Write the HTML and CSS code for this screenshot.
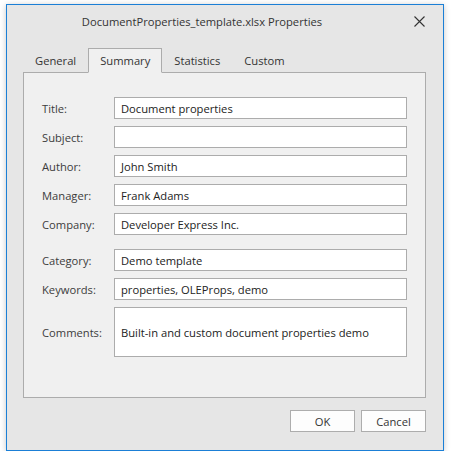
FILE: index.html
```html
<!DOCTYPE html>
<html lang="en">
<head>
<meta charset="utf-8">
<title>DocumentProperties_template.xlsx Properties</title>
<link rel="stylesheet" href="styles.css">
</head>
<body>
<div class="window">
  <div class="titlebar">
    <div class="title">DocumentProperties_template.xlsx Properties</div>
    <div class="close">
      <svg width="11" height="11" viewBox="0 0 11 11"><path d="M0.5 0.5 L10.5 10.5 M10.5 0.5 L0.5 10.5" stroke="#333" stroke-width="1.1" fill="none"/></svg>
    </div>
  </div>
  <div class="tabs">
    <div class="tab">General</div>
    <div class="tab active">Summary</div>
    <div class="tab">Statistics</div>
    <div class="tab">Custom</div>
    <div class="tab-fill"></div>
  </div>
  <div class="panel">
    <div class="form">
      <div class="label">Title:</div><div class="field">Document properties</div>
      <div class="label">Subject:</div><div class="field"></div>
      <div class="label">Author:</div><div class="field">John Smith</div>
      <div class="label">Manager:</div><div class="field">Frank Adams</div>
      <div class="label">Company:</div><div class="field">Developer Express Inc.</div>
    </div>
    <div class="form group2">
      <div class="label">Category:</div><div class="field">Demo template</div>
      <div class="label">Keywords:</div><div class="field">properties, OLEProps, demo</div>
      <div class="label">Comments:</div><div class="field memo">Built-in and custom document properties demo</div>
    </div>
  </div>
  <div class="buttons">
    <div class="btn">OK</div>
    <div class="btn">Cancel</div>
  </div>
</div>
</body>
</html>
```

FILE: styles.css
```css
html, body {
  margin: 0;
  background: #ffffff;
}
body {
  padding: 4px 0 0 6px;
  font-family: "Open Sans", "Noto Sans", sans-serif;
  font-size: 11.2px;
  color: #333333;
}
.window {
  box-sizing: border-box;
  width: 438px;
  height: 447px;
  border: 1px solid #1b7fd6;
  background: #e6e6e6;
  box-shadow: 0 1px 6px rgba(0, 0, 0, 0.22);
  display: flex;
  flex-direction: column;
}
.titlebar {
  height: 33px;
  display: flex;
  align-items: center;
}
.title {
  flex: 1;
  text-align: center;
  color: #333333;
}
.close {
  width: 44px;
  display: flex;
  justify-content: center;
  align-items: center;
  padding-right: 2px;
}
.close svg {
  display: block;
}
.tabs {
  display: flex;
  margin: 10px 17px 0 16px;
  height: 25px;
}
.tab {
  box-sizing: border-box;
  height: 25px;
  padding: 5px 12px 0;
  border-bottom: 1px solid #acacac;
  color: #333333;
}
.tab.active {
  border: 1px solid #acacac;
  border-bottom-color: #f0f0f0;
  background: #f0f0f0;
  padding: 4px 11px 0;
}
.tab-fill {
  flex: 1;
  border-bottom: 1px solid #acacac;
}
.panel {
  box-sizing: border-box;
  margin: 0 17px 0 16px;
  height: 325px;
  background: #f0f0f0;
  border: 1px solid #acacac;
  border-top: none;
  padding: 24px 18px 0 18px;
}
.form {
  display: grid;
  grid-template-columns: 72px 1fr;
  grid-auto-rows: 22px;
  row-gap: 7px;
  align-items: center;
}
.group2 {
  margin-top: 14px;
  grid-template-rows: 22px 22px 50px;
}
.label {
  color: #3c3c3c;
}
.field {
  box-sizing: border-box;
  height: 22px;
  background: #ffffff;
  border: 1px solid #acacac;
  padding: 0 6px;
  display: flex;
  align-items: center;
  color: #222222;
  white-space: nowrap;
}
.field.memo {
  height: 50px;
}
.buttons {
  display: flex;
  justify-content: flex-end;
  gap: 6px;
  margin: 12px 17px 0 0;
}
.btn {
  box-sizing: border-box;
  width: 65px;
  height: 22px;
  border: 1px solid #adadad;
  background: #fdfdfd;
  display: flex;
  align-items: center;
  justify-content: center;
  color: #333333;
}
```
